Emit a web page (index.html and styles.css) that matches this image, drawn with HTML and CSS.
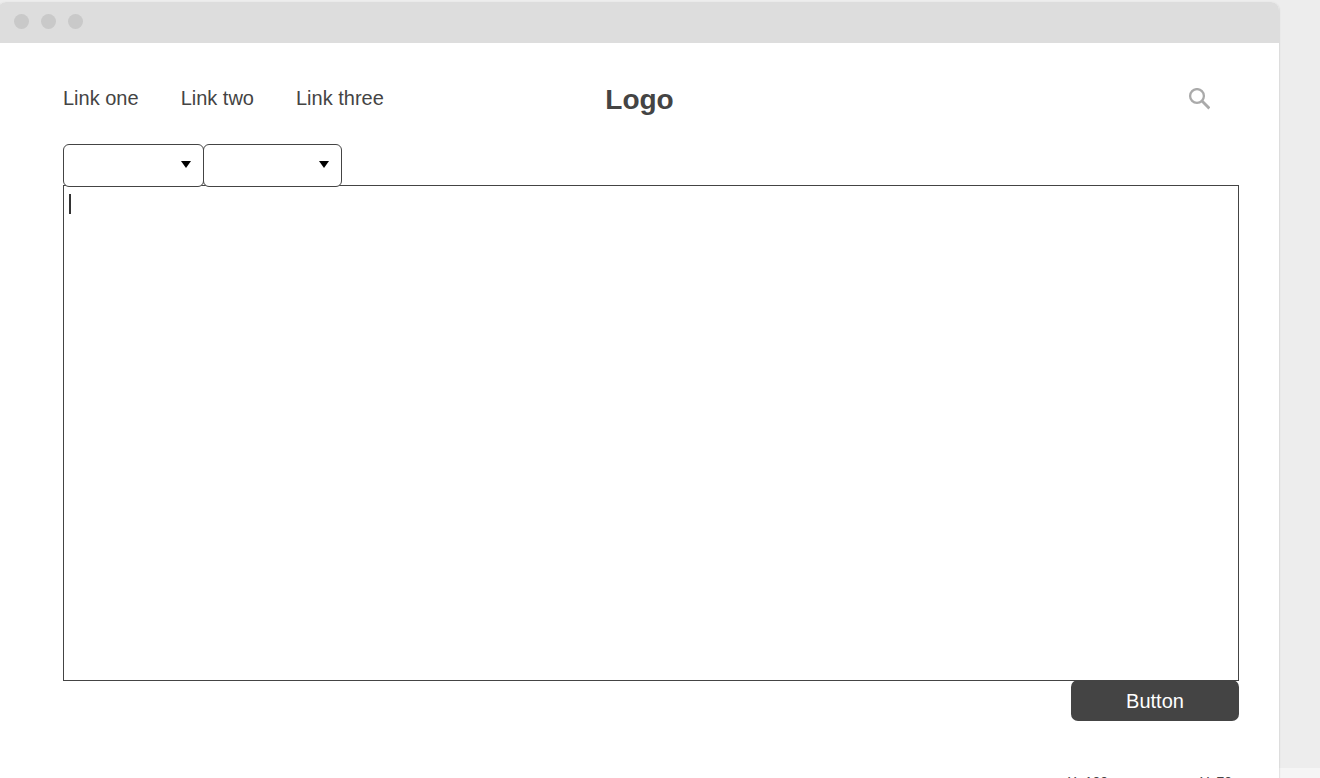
FILE: index.html
```html
<!DOCTYPE html>
<html lang="en">
<head>
<meta charset="utf-8">
<title>Logo</title>
<link rel="stylesheet" href="styles.css">
</head>
<body>
<div class="window">
  <div class="titlebar"><span class="dot"></span><span class="dot"></span><span class="dot"></span></div>
  <header class="header">
    <nav class="nav"><a href="#">Link one</a><a href="#">Link two</a><a href="#">Link three</a></nav>
    <a class="logo" href="#">Logo</a>
    <button class="search" type="button" aria-label="Search">
      <svg viewBox="0 0 22 22" width="22" height="22" aria-hidden="true"><circle cx="9" cy="8" r="6.9" fill="none" stroke="currentColor" stroke-width="2.3"/><path d="M14 13L21.4 20.4" stroke="currentColor" stroke-width="2.8" fill="none"/></svg>
    </button>
  </header>
  <main class="editor">
    <div class="toolbar">
      <div class="picker"><select aria-label="First option"><option></option></select><svg viewBox="0 0 10 7" width="10" height="7" aria-hidden="true"><path d="M0 0H10L5 7Z"/></svg></div>
      <div class="picker"><select aria-label="Second option"><option></option></select><svg viewBox="0 0 10 7" width="10" height="7" aria-hidden="true"><path d="M0 0H10L5 7Z"/></svg></div>
    </div>
    <div class="field"><textarea aria-label="Text"></textarea><span class="caret"></span></div>
    <button class="submit" type="button">Button</button>
    <div class="status"><span>X: 100</span><span>Y: 70</span></div>
  </main>
</div>
</body>
</html>
```
FILE: styles.css
```css
* { box-sizing: border-box; }
html { height: 100%; overflow: hidden; background: #f5f5f5; }
body {
  margin: 0;
  height: 100%;
  overflow: hidden;
  padding: 2px 41px 0 0;
  background: linear-gradient(#ededed, #ededed) top / 100% calc(100% - 10px) no-repeat #f5f5f5;
  font-family: "Liberation Sans", Arial, sans-serif;
  color: #444;
}
.window {
  display: flex;
  flex-direction: column;
  min-height: 100%;
  margin-left: -2px;
  padding-left: 2px;
  background: #fff;
  border-radius: 8px 8px 0 0;
  box-shadow: 0 1px 2px rgba(0, 0, 0, .25);
}
.titlebar {
  display: flex;
  align-items: center;
  gap: 12px;
  height: 41px;
  margin-left: -2px;
  padding: 0 16px 2px;
  background: #ddd;
  border-radius: 8px 8px 0 0;
}
.dot { width: 15px; height: 15px; border-radius: 50%; background: #c9c9c9; }
.header {
  display: grid;
  grid-template-columns: 1fr auto 1fr;
  align-items: center;
  height: 101px;
  padding: 12px 63px 0;
}
.nav { display: flex; gap: 42px; padding-bottom: 2px; }
.nav a { color: inherit; font-size: 20px; text-decoration: none; }
.logo { color: inherit; font-size: 28px; font-weight: 700; text-decoration: none; }
.search { justify-self: end; display: flex; margin-right: 6px; padding: 0 0 2px; border: 0; background: none; color: #aaa; }
.editor { display: flex; flex: 1; flex-direction: column; padding: 0 40px 0 63px; }
.toolbar { display: flex; z-index: 1; margin-bottom: -2px; }
.picker { position: relative; width: 141px; }
.picker + .picker { width: 139px; margin-left: -1px; }
.picker select {
  display: block;
  width: 100%;
  height: 43px;
  appearance: none;
  border: 1px solid #444;
  border-radius: 6px;
  background: #fff;
}
.picker svg { position: absolute; top: 17px; right: 13px; pointer-events: none; }
.field { position: relative; }
.field textarea {
  display: block;
  width: 100%;
  height: calc(100vh - 282px);
  padding: 8px 5px;
  border: 1px solid #444;
  border-radius: 0;
  outline: 0;
  resize: none;
  font: 20px "Liberation Sans", Arial, sans-serif;
}
.caret { position: absolute; top: 9px; left: 6px; width: 2px; height: 20px; background: #333; }
.submit {
  align-self: flex-end;
  width: 168px;
  height: 41px;
  margin-top: -1px;
  padding: 2px 0 0;
  border: 0;
  border-radius: 7px;
  background: #444;
  color: #fff;
  font: 20px "Liberation Sans", Arial, sans-serif;
}
.status { display: flex; justify-content: flex-end; gap: 92px; padding: 53px 7px 0; font-size: 14px; line-height: 16px; }
```
